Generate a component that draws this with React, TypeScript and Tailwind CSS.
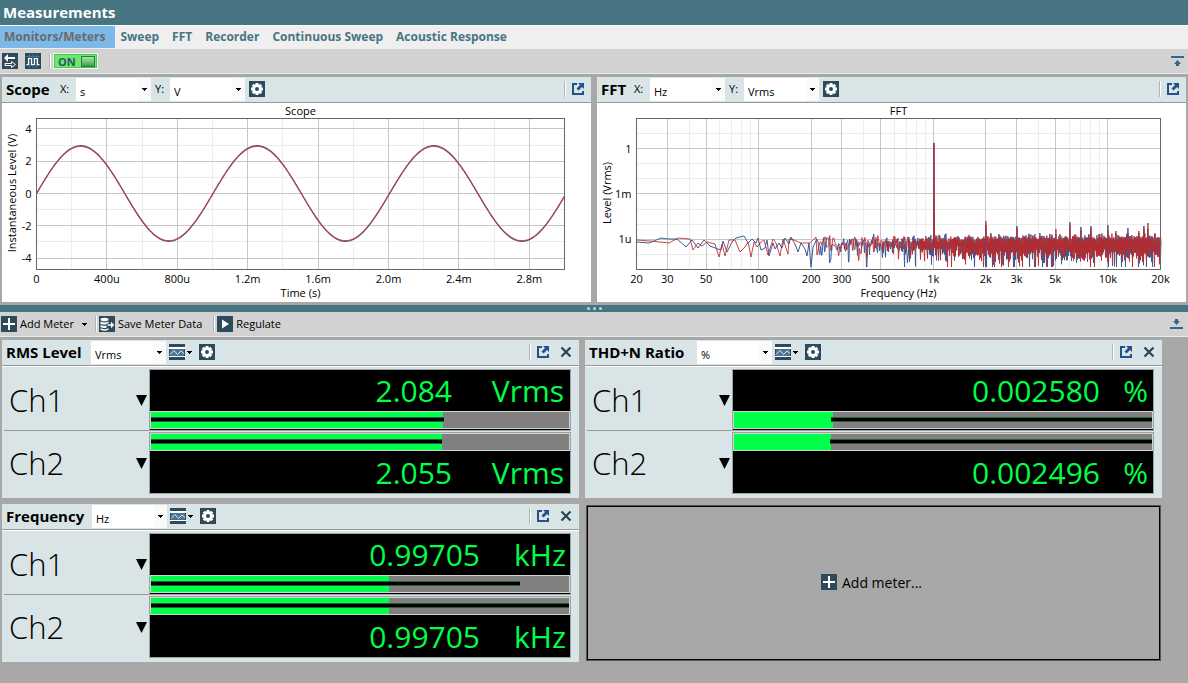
import { useState } from 'react';
import type { ReactNode } from 'react';

const NAVY = '#2d4a5b';
const BLUE = '#3b5b94';
const RED = '#cb3a37';

/* ---------- icons ---------- */

function Tile({ children }: { children: ReactNode }) {
  return (
    <svg width="16" height="16" viewBox="0 0 16 16" className="shrink-0" aria-hidden="true">
      <rect width="16" height="16" fill={NAVY} />
      {children}
    </svg>
  );
}

function GearIcon() {
  const teeth = [0, 45, 90, 135];
  return (
    <Tile>
      {teeth.map((a) => (
        <rect key={a} x="6.5" y="2" width="3" height="12" fill="#fff" transform={`rotate(${a} 8 8)`} />
      ))}
      <circle cx="8" cy="8" r="4.8" fill="#fff" />
      <circle cx="8" cy="8" r="2" fill={NAVY} />
    </Tile>
  );
}

function PlusIcon() {
  return (
    <Tile>
      <path d="M7 2h2v5h5v2H9v5H7V9H2V7h5z" fill="#fff" />
    </Tile>
  );
}

function PlayIcon() {
  return (
    <Tile>
      <path d="M5 3.5v9L12 8z" fill="#fff" />
    </Tile>
  );
}

function SwapIcon() {
  return (
    <Tile>
      <path d="M2 5l4-4v3h7v2H6v3z" fill="#fff" />
      <path d="M3 10.500h6.500V8.500L13.500 11.500 9.500 14.500V12.500H3z" fill={NAVY} stroke="#fff" strokeWidth="1" />
    </Tile>
  );
}

function WaveIcon() {
  return (
    <Tile>
      <path d="M1 3.500h14M1 12.500h14M4.500 1v14M11.500 1v14M8 1v14" stroke="#5f86b4" strokeWidth="1" opacity="0.6" />
      <path d="M1.500 11.500h2v-6h3v6h3v-6h3v6h2" fill="none" stroke="#fff" strokeWidth="1.200" />
    </Tile>
  );
}

function SaveDataIcon() {
  return (
    <Tile>
      <ellipse cx="5.500" cy="3.500" rx="4" ry="1.800" fill="#fff" />
      <path d="M1.500 5.500q4 2 8 0v2h-2v.8q-3 .6-6-.4zM1.500 9q3 1.200 6 .7v2q-3 .6-6-.5zM1.500 12.300q4 1.700 8 0v1.400q-4 2-8 0z" fill="#fff" />
      <path d="M8.500 8.300H12V5.800L15.300 9 12 12.200V9.800H8.500z" fill="#fff" />
    </Tile>
  );
}

function GraphIcon() {
  return (
    <Tile>
      <rect y="3" width="16" height="2" fill="#fff" />
      <rect x="1" y="5" width="14" height="7" fill="#4e7396" />
      <rect y="12" width="16" height="1" fill="#fff" />
      <path d="M1 10.500L5 6.500l3.500 4L12 7l3 2.500" fill="none" stroke="#d8efe8" strokeWidth="1" />
    </Tile>
  );
}

function PopOutIcon() {
  return (
    <svg width="12" height="12" viewBox="0 0 12 12" aria-hidden="true">
      <path d="M5 1H1v10h10V8" fill="none" stroke="#26508a" strokeWidth="2" />
      <path d="M6 0h6v6l-2-2-3.500 3.500-2-2L8 2z" fill="#26508a" />
    </svg>
  );
}

function CloseIcon() {
  return (
    <svg width="12" height="12" viewBox="0 0 12 12" aria-hidden="true">
      <path d="M1.500 1.500l9 9M10.500 1.500l-9 9" stroke="#27465a" strokeWidth="2.200" />
    </svg>
  );
}

function Caret() {
  return (
    <svg width="5" height="3" viewBox="0 0 5 3" shapeRendering="crispEdges" aria-hidden="true">
      <path d="M0 0h5v1H4v1H3v1H2V2H1V1H0z" fill="#000" />
    </svg>
  );
}

/* ---------- small controls ---------- */

function Divider() {
  return <span className="h-4 w-[2px] shrink-0 border-l border-r border-l-[#b4b4b4] border-r-white" />;
}

function UnitSelect({ id, label, value }: { id: string; label: string; value: string }) {
  return (
    <div className="relative h-[23px] w-[75px] shrink-0 bg-white">
      <select id={id} aria-label={label} defaultValue={value} className="h-full w-full appearance-none bg-transparent pb-1 pl-1 text-[11px] text-black outline-none">
        <option>{value}</option>
      </select>
      <span className="pointer-events-none absolute right-0 top-0 flex h-full w-[13px] items-center justify-center bg-[#fafafa]">
        <Caret />
      </span>
    </div>
  );
}

function IconButton({ label, children }: { label: string; children: ReactNode }) {
  return (
    <button aria-label={label} className="flex shrink-0 items-center gap-[2px]">
      {children}
    </button>
  );
}

/* ---------- charts ---------- */

type Label = { at: number; text: string };

type ChartProps = {
  title: string;
  xTitle: string;
  yTitle: string;
  left: number;
  right: number;
  major: { x: number[]; y: number[] };
  minor: { x: number[]; y: number[] };
  xLabels: Label[];
  yLabels: Label[];
  children: ReactNode;
};

const TOP = 15.5;
const BOTTOM = 166.5;

function Chart({ title, xTitle, yTitle, left, right, major, minor, xLabels, yLabels, children }: ChartProps) {
  const mid = (left + right) / 2;
  const grid = (g: { x: number[]; y: number[] }) =>
    g.x.map((x) => `M${x} ${TOP}V${BOTTOM}`).join('') + g.y.map((y) => `M${left} ${y}H${right}`).join('');
  const crisp = (n: number[]) => n.map((v) => Math.floor(v) + 0.5);

  return (
    <svg viewBox="0 0 589 199" className="block h-auto w-full bg-white text-[11px]" role="img" aria-label={title}>
      <path d={grid({ x: crisp(minor.x), y: crisp(minor.y) })} stroke="#ececec" />
      <path d={grid({ x: crisp(major.x), y: crisp(major.y) })} stroke="#c6c6c6" />
      {children}
      <rect x={left} y={TOP} width={right - left} height={BOTTOM - TOP} fill="none" stroke="#666" />
      <text x={mid} y="12" textAnchor="middle">{title}</text>
      <text x={mid} y="194" textAnchor="middle">{xTitle}</text>
      <text transform="translate(14 90) rotate(-90)" textAnchor="middle">{yTitle}</text>
      {xLabels.map((l) => (
        <text key={l.text} x={l.at} y="180" textAnchor="middle">{l.text}</text>
      ))}
      {yLabels.map((l) => (
        <text key={l.text} x={left - 5} y={l.at + 4} textAnchor="end">{l.text}</text>
      ))}
    </svg>
  );
}

function ScopeChart() {
  const left = 34.5;
  const right = 562.5;
  const px = (ms: number) => left + (ms * (right - left)) / 3;
  const py = (v: number) => 90.5 - v * 16.15;
  const sine = (amp: number) => {
    const pts: string[] = [];
    for (let x = left; x <= right; x += 1) {
      const ms = ((x - left) * 3) / (right - left);
      pts.push(`${x},${py(amp * Math.sin(2 * Math.PI * 0.997 * ms)).toFixed(2)}`);
    }
    return pts.join(' ');
  };

  return (
    <Chart
      title="Scope"
      xTitle="Time (s)"
      yTitle="Instantaneous Level (V)"
      left={left}
      right={right}
      major={{ x: [0.4, 0.8, 1.2, 1.6, 2, 2.4, 2.8].map(px), y: [4, 2, 0, -2, -4].map(py) }}
      minor={{ x: [0.2, 0.6, 1, 1.4, 1.8, 2.2, 2.6].map(px), y: [3, 1, -1, -3].map(py) }}
      xLabels={['0', '400u', '800u', '1.2m', '1.6m', '2.0m', '2.4m', '2.8m'].map((text, i) => ({ text, at: px(i * 0.4) }))}
      yLabels={[4, 2, 0, -2, -4].map((v) => ({ text: String(v), at: py(v) }))}
    >
      <polyline points={sine(2.96)} fill="none" stroke={BLUE} strokeWidth="1.2" />
      <polyline points={sine(2.92)} fill="none" stroke={RED} strokeWidth="1.2" opacity="0.85" />
    </Chart>
  );
}

const F_LEFT = 39.5;
const F_RIGHT = 563.5;
const fx = (hz: number) => F_LEFT + (Math.log10(hz / 20) * (F_RIGHT - F_LEFT)) / 3;
const fy = (decade: number) => 45.5 - decade * 15.15;

// sparse bins at the low end of the spectrum
const LOW_BLUE = [
  [40, 139], [52, 140], [64, 135], [71, 136], [80, 136], [89, 144], [95, 137], [101, 145], [107, 137], [113, 143],
  [121, 146], [124, 147], [126, 138], [130, 149], [135, 139], [139, 135], [147, 133], [151, 140], [155, 136], [159, 140],
  [161, 135], [164, 147], [168, 145], [170, 137], [172, 153], [176, 140], [178, 146], [182, 140], [185, 145], [188, 135],
  [192, 141], [194, 134], [198, 141], [201, 149], [204, 140], [208, 146], [210, 153], [212, 140], [214, 164], [216, 144], [220, 136],
];
const LOW_RED = [
  [40, 137], [53, 138], [72, 140], [81, 135], [93, 136], [96, 147], [101, 140], [105, 143], [110, 139], [118, 141],
  [122, 154], [125, 141], [128, 153], [132, 137], [138, 137], [143, 149], [148, 144], [151, 139], [154, 154], [157, 139],
  [160, 144], [164, 139], [167, 137], [171, 152], [176, 136], [179, 140], [183, 153], [186, 136], [191, 151], [192, 136],
  [197, 137], [204, 140], [213, 140], [219, 134], [220, 152], [223, 139],
];

const PEAKS: [number, number, number][] = [
  // hz, blue top, red top
  [2000, 122, 118], [2140, 130, 132], [3000, 123, 125], [3800, 134, 131], [4050, 130, 133], [4600, 131, 134],
  [5000, 131, 126], [6000, 119, 122], [7000, 124, 127], [8000, 123, 125], [8900, 134, 131], [10000, 122, 127],
  [11000, 130, 128], [13000, 125, 130], [14900, 130, 128], [16000, 123, 126], [16900, 126, 120], [18500, 131, 130],
];

function noise(seed: number, low: number[][], channel: 1 | 2) {
  let s = seed;
  const rand = () => {
    s = (s * 1664525 + 1013904223) % 4294967296;
    return (s + 1) / 4294967297;
  };
  const pts = low.map(([x, y]) => `${x},${y}`);
  const startX = low[low.length - 1][0];
  const buckets = new Map<number, { min: number; max: number }>();

  for (let hz = 210; hz < 20000; hz += Math.max(4, hz * 0.0014)) {
    const x = Math.floor(fx(hz)) + 0.5;
    if (x <= startX) continue;
    const y = Math.min(164, 140 - 11 * Math.log10(-Math.log(rand())));
    const b = buckets.get(x);
    if (b) {
      b.min = Math.min(b.min, y);
      b.max = Math.max(b.max, y);
    } else {
      buckets.set(x, { min: y, max: y });
    }
  }
  PEAKS.forEach((p) => {
    const b = buckets.get(Math.floor(fx(p[0])) + 0.5);
    if (b) b.min = p[channel];
  });
  const tone = buckets.get(Math.floor(fx(997)) + 0.5);
  if (tone) tone.min = 40;

  [...buckets.entries()].forEach(([x, b]) => {
    pts.push(`${x},${b.max.toFixed(1)}`, `${x + 0.4},${b.min.toFixed(1)}`);
  });
  return pts.join(' ');
}

function FftChart() {
  const labels: [number, string][] = [
    [20, '20'], [30, '30'], [50, '50'], [100, '100'], [200, '200'], [300, '300'], [500, '500'],
    [1000, '1k'], [2000, '2k'], [3000, '3k'], [5000, '5k'], [10000, '10k'], [20000, '20k'],
  ];
  const minorHz = [40, 60, 70, 80, 90, 400, 600, 700, 800, 900, 4000, 6000, 7000, 8000, 9000];

  return (
    <Chart
      title="FFT"
      xTitle="Frequency (Hz)"
      yTitle="Level (Vrms)"
      left={F_LEFT}
      right={F_RIGHT}
      major={{ x: labels.slice(1, -1).map(([hz]) => fx(hz)), y: [0, -3, -6].map(fy) }}
      minor={{ x: minorHz.map(fx), y: [1, -1, -2, -4, -5, -7].map(fy) }}
      xLabels={labels.map(([hz, text]) => ({ text, at: fx(hz) }))}
      yLabels={[
        { text: '1', at: fy(0) },
        { text: '1m', at: fy(-3) },
        { text: '1u', at: fy(-6) },
      ]}
    >
      <polyline points={noise(7, LOW_BLUE, 1)} fill="none" stroke={BLUE} />
      <polyline points={noise(91, LOW_RED, 2)} fill="none" stroke="#b8292b" opacity="0.85" />
    </Chart>
  );
}

type ChartPanelProps = { title: string; titleClass: string; x: string; y: string; children: ReactNode };

function ChartPanel({ title, titleClass, x, y, children }: ChartPanelProps) {
  return (
    <section className="min-w-0 bg-white">
      <header className="flex h-[26px] items-center border-b border-[#999] bg-[#d8e4e5] px-1 pb-px">
        <h2 className={`mr-2 shrink-0 text-[15px] font-bold ${titleClass}`}>{title}</h2>
        <label htmlFor={`${title}-x`} className="w-4 text-[11px]">X:</label>
        <UnitSelect id={`${title}-x`} label="X unit" value={x} />
        <label htmlFor={`${title}-y`} className="ml-1 w-[15px] text-[11px]">Y:</label>
        <UnitSelect id={`${title}-y`} label="Y unit" value={y} />
        <div className="ml-1 mr-auto flex">
          <IconButton label="Settings"><GearIcon /></IconButton>
        </div>
        <Divider />
        <div className="ml-[6px] mr-[3px] flex">
          <IconButton label="Open in window"><PopOutIcon /></IconButton>
        </div>
      </header>
      {children}
    </section>
  );
}

/* ---------- meters ---------- */

type Channel = { name: string; value: string; fill: number; lineFrom: number; lineTo: number };
type Meter = { title: string; titleClass: string; unit: string; display: string; unitClass: string; channels: Channel[] };

const meters: Meter[] = [
  {
    title: 'RMS Level',
    titleClass: 'w-[77px]',
    unit: 'Vrms',
    display: 'Vrms',
    unitClass: 'w-[118px] pr-[6px]',
    channels: [
      { name: 'Ch1', value: '2.084', fill: 69.8, lineFrom: 0, lineTo: 70 },
      { name: 'Ch2', value: '2.055', fill: 69.7, lineFrom: 0, lineTo: 69.7 },
    ],
  },
  {
    title: 'THD+N Ratio',
    titleClass: 'w-[100px]',
    unit: '%',
    display: '%',
    unitClass: 'w-[53px] pr-[5px]',
    channels: [
      { name: 'Ch1', value: '0.002580', fill: 23.6, lineFrom: 23.2, lineTo: 100 },
      { name: 'Ch2', value: '0.002496', fill: 23.2, lineFrom: 23, lineTo: 100 },
    ],
  },
  {
    title: 'Frequency',
    titleClass: 'w-[78px]',
    unit: 'Hz',
    display: 'kHz',
    unitClass: 'w-[90px] pr-[4px]',
    channels: [
      { name: 'Ch1', value: '0.99705', fill: 57, lineFrom: 0, lineTo: 88.3 },
      { name: 'Ch2', value: '0.99705', fill: 57, lineFrom: 0, lineTo: 100 },
    ],
  },
];

function LevelBar({ channel }: { channel: Channel }) {
  return (
    <div className="relative h-[18px] shrink-0 border border-[#cfd4d0] bg-[#808080]">
      <div className="h-full bg-[#00ff48]" style={{ width: `${channel.fill}%` }} />
      <div
        className="absolute top-[5px] h-[5px] border-y border-[#2a5a38] bg-black"
        style={{ left: `${channel.lineFrom}%`, width: `${channel.lineTo - channel.lineFrom}%` }}
      />
    </div>
  );
}

function Readout({ meter, channel, flipped }: { meter: Meter; channel: Channel; flipped: boolean }) {
  return (
    <div className={`flex h-[62px] border border-[#9aa5a5] bg-black ${flipped ? 'flex-col-reverse' : 'flex-col pb-px'}`}>
      <div className="flex flex-1 items-center justify-end pt-px text-[30px] leading-none text-[#00ff48]">
        <span>{channel.value}</span>
        <span className={`text-right ${meter.unitClass}`}>{meter.display}</span>
      </div>
      <LevelBar channel={channel} />
    </div>
  );
}

function MeterPanel({ meter }: { meter: Meter }) {
  return (
    <section className="h-[158px] min-w-0 bg-[#d8e4e5]">
      <header className="flex h-[26px] items-center border-b border-[#999] px-1 pb-px">
        <h2 className={`mr-2 shrink-0 text-[15px] font-bold ${meter.titleClass}`}>{meter.title}</h2>
        <UnitSelect id={`${meter.title}-unit`} label={`${meter.title} unit`} value={meter.unit} />
        <div className="ml-[3px] mr-auto flex gap-[7px]">
          <IconButton label="Graph"><GraphIcon /><Caret /></IconButton>
          <IconButton label="Settings"><GearIcon /></IconButton>
        </div>
        <Divider />
        <div className="ml-[6px] mr-[3px] flex gap-[11px]">
          <IconButton label="Open in window"><PopOutIcon /></IconButton>
          <IconButton label="Close"><CloseIcon /></IconButton>
        </div>
      </header>
      <div className="flex border-t border-white pr-2 pt-[2px]">
        <div className="ml-[2px] w-[145px] shrink-0">
          {meter.channels.map((c, i) => (
            <button
              key={c.name}
              className={`flex w-full items-center justify-between pl-[5px] pr-[2px] pt-[2px] text-[31px] font-light leading-none ${i === 0 ? 'h-[62px] border-b border-[#999]' : 'h-[63px]'}`}
            >
              {c.name}
              <svg width="11" height="11" viewBox="0 0 11 11" aria-hidden="true">
                <path d="M0 0h11L5.500 11z" />
              </svg>
            </button>
          ))}
        </div>
        <div className="flex min-w-0 flex-1 flex-col gap-px">
          {meter.channels.map((c, i) => (
            <Readout key={c.name} meter={meter} channel={c} flipped={i === 1} />
          ))}
        </div>
      </div>
    </section>
  );
}

/* ---------- page ---------- */

const tabs = ['Monitors/Meters', 'Sweep', 'FFT', 'Recorder', 'Continuous Sweep', 'Acoustic Response'];

function App() {
  const [activeTab, setActiveTab] = useState(tabs[0]);
  const [on, setOn] = useState(true);

  return (
    <div className="min-h-screen bg-[#a8a8a8] font-['Segoe_UI','Open_Sans','Noto_Sans',sans-serif] text-black">
      <h1 className="flex h-[25px] items-center bg-[#487582] pl-[3px] text-[15px] font-bold text-white">Measurements</h1>

      <nav className="flex h-6 items-start border-t border-white bg-[#efefef]">
        {tabs.map((t) => (
          <button
            key={t}
            onClick={() => setActiveTab(t)}
            className={`h-[22px] text-[12px] font-bold ${t === activeTab ? 'bg-[#7cb9e8] pl-1 pr-[10px] text-[#6a6a6a]' : 'pl-[5px] pr-2 text-[#487582]'}`}
          >
            {t}
          </button>
        ))}
      </nav>

      <div className="flex h-[25px] items-center border-b border-[#e4ecec] bg-[#d2d2d2] pl-[2px] pr-1">
        <IconButton label="Loop"><SwapIcon /></IconButton>
        <div className="ml-[7px] mr-2 flex">
          <IconButton label="Generator"><WaveIcon /></IconButton>
        </div>
        <Divider />
        <button
          role="switch"
          aria-checked={on}
          aria-label="Generator output"
          onClick={() => setOn(!on)}
          className="ml-[2px] flex h-4 w-[45px] items-center justify-between border border-[#e8ffe8] bg-[#6ee76e] pl-1 pr-[2px] text-[11px] font-bold leading-none text-[#2b5a5e] ring-1 ring-inset ring-[#4cc552]"
        >
          ON
          <span className="h-[11px] w-[14px] border border-[#2b7a3a] bg-linear-to-b from-[#a5e8a5] to-[#3f9f4b]" />
        </button>
        <div className="ml-auto flex">
          <IconButton label="Collapse up">
            <svg width="13" height="11" viewBox="0 0 13 11" aria-hidden="true">
              <path d="M0 0h13v2H0zM6.500 4L10 8H8v2H5V8H3z" fill="#3b6289" />
            </svg>
          </IconButton>
        </div>
      </div>

      <div className="grid grid-cols-2 gap-[6px] px-[2px] py-[3px]">
        <ChartPanel title="Scope" titleClass="w-[46px]" x="s" y="V"><ScopeChart /></ChartPanel>
        <ChartPanel title="FFT" titleClass="w-[25px]" x="Hz" y="Vrms"><FftChart /></ChartPanel>
      </div>

      <div className="flex h-[7px] items-center justify-center gap-[3px] bg-[#487582]">
        {[0, 1, 2].map((i) => (
          <span key={i} className="size-[3px] rounded-full bg-[#c3d3d7]" />
        ))}
      </div>

      <div className="flex h-[25px] items-center border-b border-[#e4ecec] bg-[#d2d2d2] pl-px pr-[5px] text-[11px]">
        <button className="flex items-center gap-[3px]">
          <PlusIcon />
          Add Meter
          <span className="ml-[5px]"><Caret /></span>
        </button>
        <span className="ml-[8px] mr-[2px] flex"><Divider /></span>
        <button className="flex items-center gap-[3px]"><SaveDataIcon />Save Meter Data</button>
        <span className="ml-[11px] mr-[2px] flex"><Divider /></span>
        <button className="flex items-center gap-[3px]"><PlayIcon />Regulate</button>
        <div className="ml-auto flex">
          <IconButton label="Collapse down">
            <svg width="13" height="11" viewBox="0 0 13 11" aria-hidden="true">
              <path d="M0 8h13v2H0zM5 0h3v2h2L6.500 6 3 2h2z" fill="#3b6289" />
            </svg>
          </IconButton>
        </div>
      </div>

      <div className="grid grid-cols-2 gap-[6px] pb-5 pl-[2px] pr-[26px] pt-[3px]">
        {meters.map((m) => (
          <MeterPanel key={m.title} meter={m} />
        ))}
        <button className="m-[2px] flex items-center justify-center gap-[5px] border border-black pb-[2px] pr-1 text-[14px] ring-1 ring-[#555]">
          <PlusIcon />
          Add meter...
        </button>
      </div>
    </div>
  );
}

export default App;
